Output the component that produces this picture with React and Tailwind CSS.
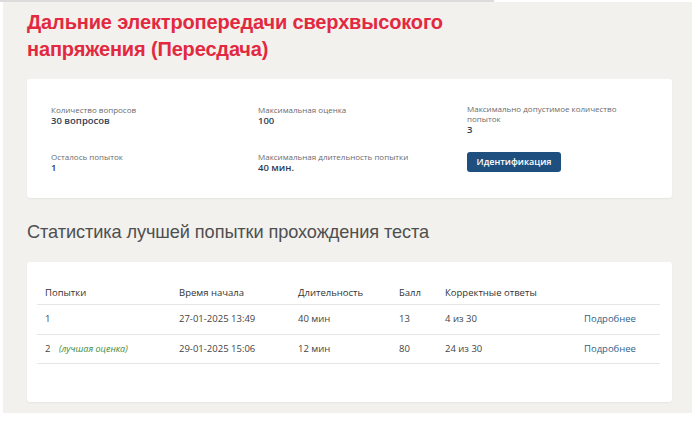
export default function App() {
  const info = "font-['Open_Sans',sans-serif]";
  return (
    <div className="w-[699px] h-[434px] bg-white overflow-hidden">
      <div className="h-[2px] w-[494px] bg-[#dcdcdc]" />
      <div className="ml-[3px] w-[689px] h-[411px] bg-[#f2f1ee] pl-[24px] pr-[20px] pt-[7px]">
        <h1 className="font-['Liberation_Sans',sans-serif] text-[20px] leading-[27px] font-semibold text-[#e2293f] tracking-[-0.15px]">
          Дальние электропередачи сверхвысокого<br />напряжения (Пересдача)
        </h1>
        <div className={`mt-[16px] h-[119px] bg-white rounded-[3px] shadow-[0_1px_2px_rgba(0,0,0,0.06)] pl-[24px] pt-[25px] ${info}`}>
          <div className="grid grid-cols-[207px_209px_1fr] gap-y-[16px]">
            <div>
              <div className="text-[8px] leading-[11px] text-[#6b6b6b]">Количество вопросов</div>
              <div className="text-[9.5px] leading-[12px] font-semibold text-[#2e3d55]">30 вопросов</div>
            </div>
            <div>
              <div className="text-[8px] leading-[11px] text-[#6b6b6b]">Максимальная оценка</div>
              <div className="text-[9.5px] leading-[12px] font-semibold text-[#2e3d55]">100</div>
            </div>
            <div>
              <div className="text-[8px] leading-[10px] text-[#6b6b6b] w-[160px]">Максимально допустимое количество попыток</div>
              <div className="text-[9.5px] leading-[11px] font-semibold text-[#2e3d55]">3</div>
            </div>
            <div>
              <div className="text-[8px] leading-[11px] text-[#6b6b6b]">Осталось попыток</div>
              <div className="text-[9.5px] leading-[12px] font-semibold text-[#2e3d55]">1</div>
            </div>
            <div>
              <div className="text-[8px] leading-[11px] text-[#6b6b6b]">Максимальная длительность попытки</div>
              <div className="text-[9.5px] leading-[12px] font-semibold text-[#2e3d55]">40 мин.</div>
            </div>
            <div>
              <button className="block mt-[1px] h-[20px] w-[94px] rounded-[3px] bg-[#1f4f7f] text-white text-[9px] font-semibold">Идентификация</button>
            </div>
          </div>
        </div>
        <h2 className="mt-[23px] font-['Liberation_Sans',sans-serif] text-[18.2px] leading-[22px] text-[#4f4f4f] tracking-[-0.1px]">
          Статистика лучшей попытки прохождения теста
        </h2>
        <div className={`mt-[19px] h-[140px] bg-white rounded-[3px] shadow-[0_1px_2px_rgba(0,0,0,0.06)] pl-[10px] pr-[12px] pt-[24px] ${info}`}>
          <div className="text-[9.5px] text-[#444]">
            <div className="grid grid-cols-[134px_119px_101px_46px_139px_1fr] h-[19px] items-start pl-[8px] border-b border-[#e6e6e6] font-medium text-[#333]">
              <div>Попытки</div>
              <div>Время начала</div>
              <div>Длительность</div>
              <div>Балл</div>
              <div>Корректные ответы</div>
              <div></div>
            </div>
            <div className="grid grid-cols-[134px_119px_101px_46px_139px_1fr] h-[30px] items-center pl-[8px] border-b border-[#e6e6e6]">
              <div>1</div>
              <div>27-01-2025 13:49</div>
              <div>40 мин</div>
              <div>13</div>
              <div>4 из 30</div>
              <div className="text-[#2f5f8c]">Подробнее</div>
            </div>
            <div className="grid grid-cols-[134px_119px_101px_46px_139px_1fr] h-[29px] items-center pl-[8px] border-b border-[#e6e6e6]">
              <div>2 <span className="ml-[6px] italic text-[9px] text-[#3d8a3d]">(лучшая оценка)</span></div>
              <div>29-01-2025 15:06</div>
              <div>12 мин</div>
              <div>80</div>
              <div>24 из 30</div>
              <div className="text-[#2f5f8c]">Подробнее</div>
            </div>
          </div>
        </div>
      </div>
    </div>
  );
}
